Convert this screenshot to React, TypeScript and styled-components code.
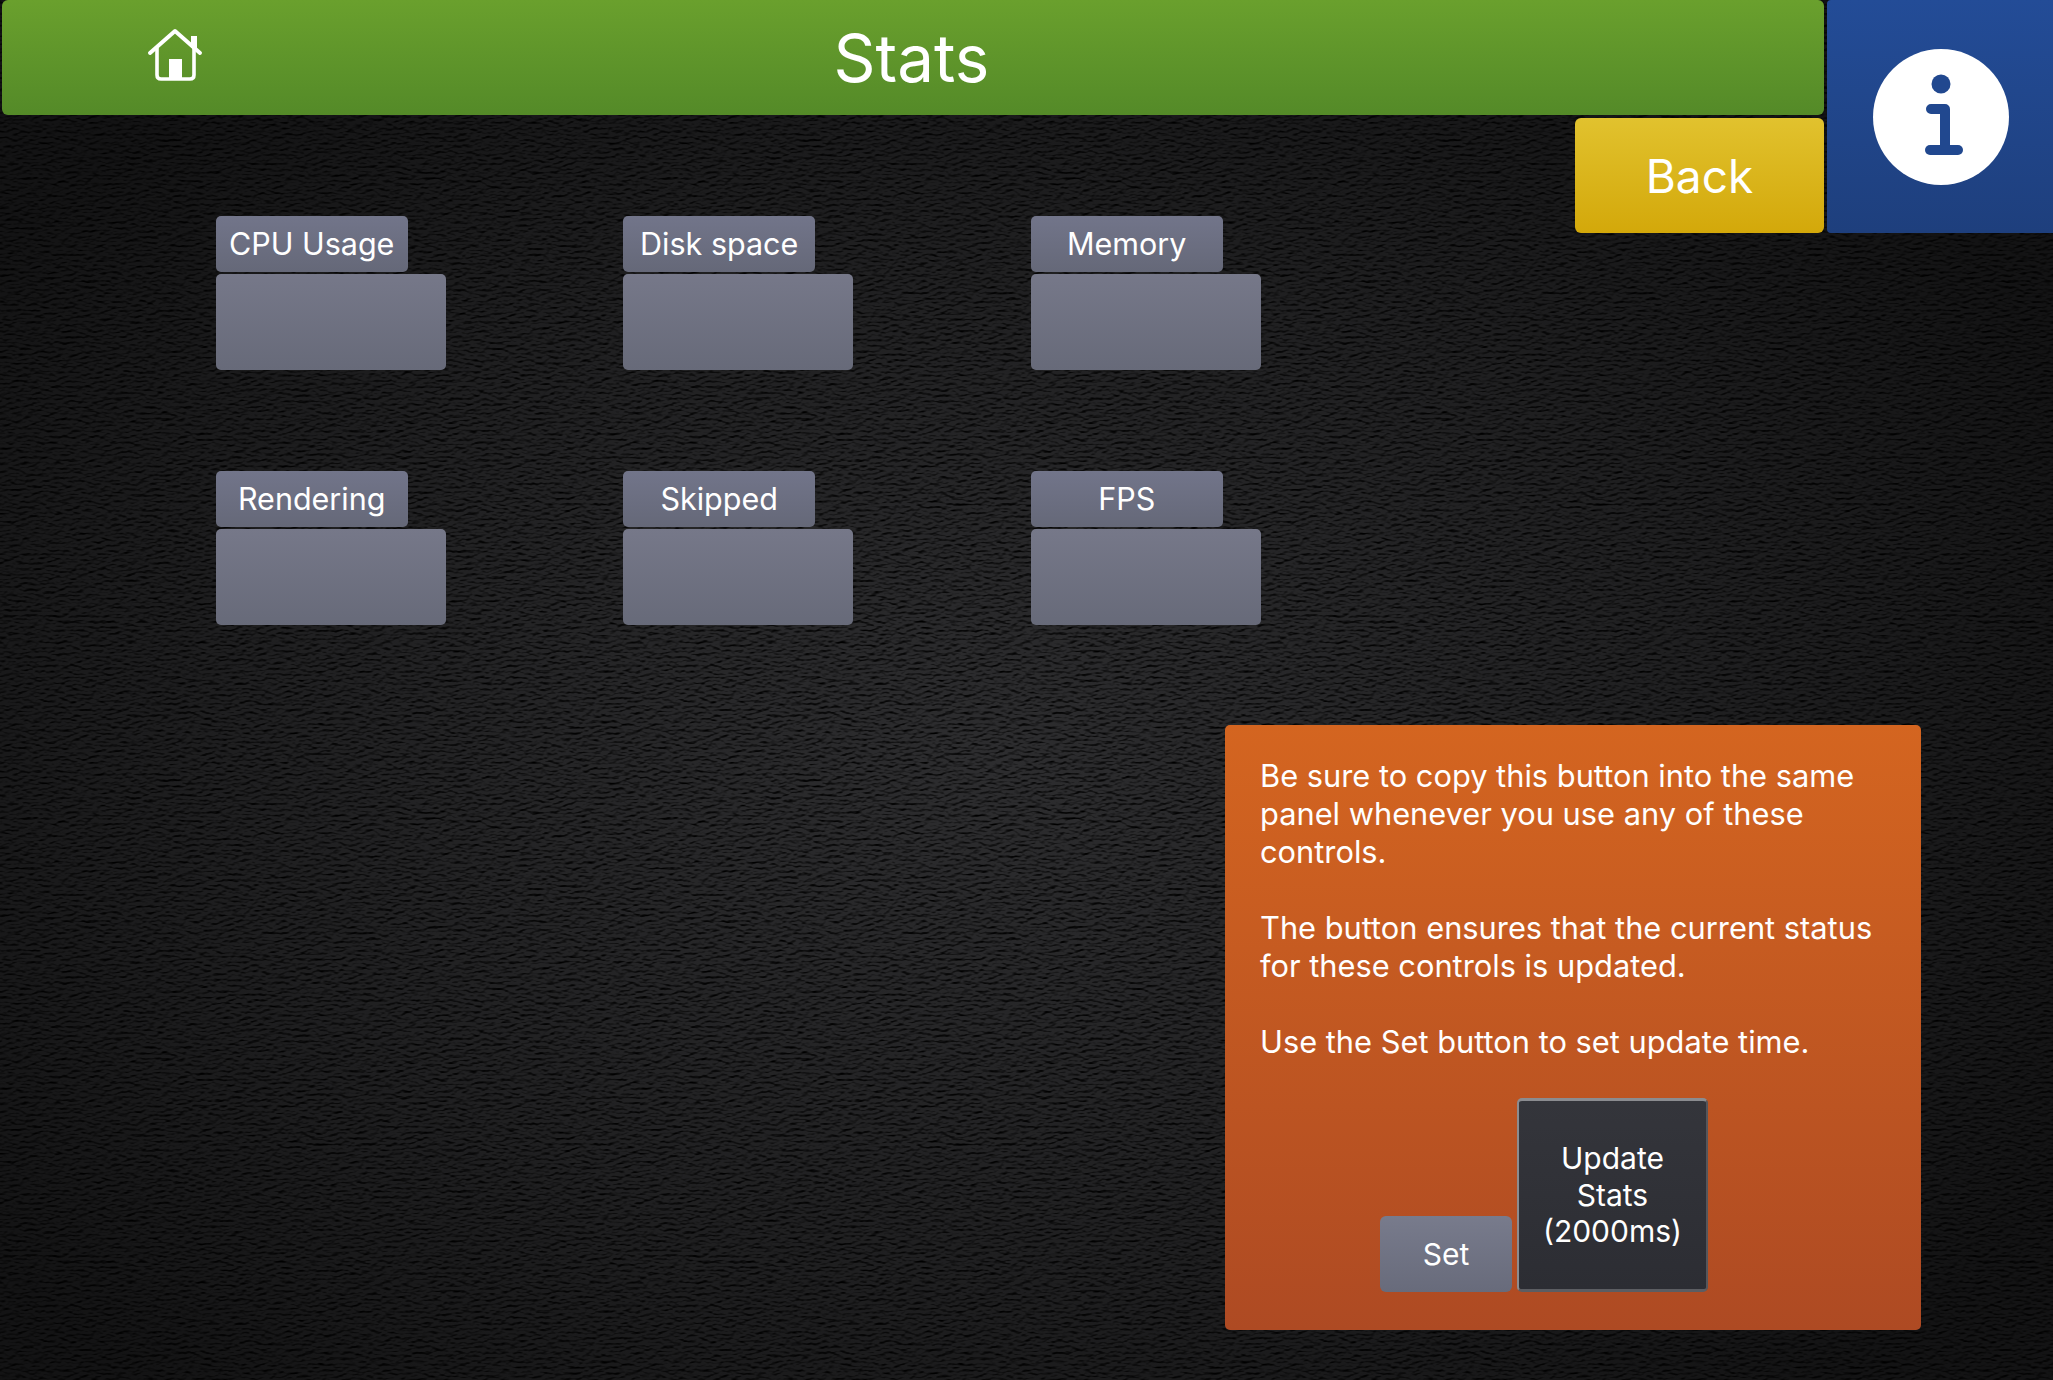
import styled, { createGlobalStyle } from 'styled-components';

const noise = encodeURIComponent(
  `<svg xmlns='http://www.w3.org/2000/svg' width='640' height='640'><filter id='n' x='0' y='0' width='100%' height='100%' color-interpolation-filters='sRGB'><feTurbulence type='fractalNoise' baseFrequency='0.13 0.34' numOctaves='2' seed='7' stitchTiles='stitch' result='t'/><feDiffuseLighting in='t' lighting-color='#ffffff' surfaceScale='2.6' diffuseConstant='1.15'><feDistantLight azimuth='80' elevation='52'/></feDiffuseLighting></filter><rect width='640' height='640' filter='url(#n)'/></svg>`
);

const GlobalStyle = createGlobalStyle`
  html, body {
    margin: 0;
    padding: 0;
    background: #101010;
  }
`;

const Page = styled.div`
  position: relative;
  width: 2053px;
  height: 1380px;
  overflow: hidden;
  display: flex;
  flex-direction: column;
  font-family: Inter, 'Liberation Sans', sans-serif;
  color: #fff;
  background-color: #2f2f31;
  background-image:
    radial-gradient(ellipse 60% 62% at 48% 55%, rgba(0, 0, 0, 0.04) 0%, rgba(0, 0, 0, 0.34) 60%, rgba(0, 0, 0, 0.6) 100%),
    url("data:image/svg+xml,${noise}");
  background-blend-mode: normal, multiply;
`;

const TopArea = styled.div`
  display: flex;
  height: 625px;
`;

const LeftColumn = styled.div`
  width: 1827px;
  padding-left: 2px;
  box-sizing: border-box;
`;

const Header = styled.header`
  position: relative;
  width: 1822px;
  height: 115px;
  border-radius: 6px;
  background: linear-gradient(180deg, #6aa02d 0%, #548a28 100%);
  display: flex;
  align-items: center;
  justify-content: center;
`;

const HomeLink = styled.a`
  position: absolute;
  left: 141px;
  top: 28px;
  display: block;
  width: 60px;
  height: 54px;
`;

const Title = styled.h1`
  margin: 0 0 -3px -3px;
  font-size: 65.5px;
  font-weight: 400;
  line-height: 1;
`;

const Content = styled.div`
  display: flex;
  justify-content: space-between;
  padding-right: 3px;
`;

const TileGrid = styled.div`
  display: grid;
  grid-template-columns: repeat(3, 230px);
  grid-auto-rows: 154px;
  column-gap: 177.5px;
  row-gap: 101px;
  padding: 101px 0 0 213.7px;
`;

const Tile = styled.div`
  display: flex;
  flex-direction: column;
  gap: 2px;
`;

const TileLabel = styled.div`
  width: 192px;
  height: 56px;
  padding-bottom: 1px;
  box-sizing: border-box;
  border-radius: 5px;
  background: linear-gradient(180deg, #72758a 0%, #656878 100%);
  display: flex;
  align-items: center;
  justify-content: center;
  font-size: 30.5px;
  white-space: nowrap;
`;

const TileValue = styled.div`
  width: 230px;
  height: 96px;
  border-radius: 5px;
  background: linear-gradient(180deg, #767889 0%, #676a79 100%);
`;

const BackButton = styled.button`
  width: 249px;
  height: 115px;
  margin-top: 3px;
  border: none;
  border-radius: 6px;
  background: linear-gradient(180deg, #e1c22e 0%, #d3a80a 100%);
  color: #fff;
  font-family: inherit;
  font-size: 46px;
  padding: 0;
`;

const InfoPanel = styled.div`
  width: 226px;
  height: 233px;
  padding-left: 2px;
  box-sizing: border-box;
  border-radius: 4px 0 0 4px;
  background: linear-gradient(180deg, #234c97 0%, #1e3f7d 100%);
  display: flex;
  align-items: center;
  justify-content: center;
`;

const NoticeRow = styled.div`
  display: flex;
  justify-content: flex-end;
  padding: 100px 132px 0 0;
`;

const Notice = styled.section`
  width: 696px;
  height: 605px;
  box-sizing: border-box;
  border-radius: 5px;
  padding: 32px 35px 38px;
  background: linear-gradient(180deg, #d46520 0%, #ae4a23 100%);
  display: flex;
  flex-direction: column;
`;

const NoticeText = styled.p`
  margin: 0 0 38px;
  font-size: 30.8px;
  line-height: 38px;

  &:last-of-type {
    margin-bottom: 0;
  }
`;

const Actions = styled.div`
  margin-top: auto;
  display: flex;
  align-items: flex-end;
  gap: 5px;
  padding-left: 120px;
`;

const SetButton = styled.button`
  width: 132px;
  height: 76px;
  border: none;
  border-radius: 6px;
  padding: 0;
  background: linear-gradient(180deg, #787b8c 0%, #686b7b 100%);
  color: #fff;
  font-family: inherit;
  font-size: 30px;
`;

const UpdateButton = styled.button`
  width: 191px;
  height: 194px;
  box-sizing: border-box;
  border: none;
  border-top: 3px solid #8b8c90;
  border-left: 2px solid #8b8c90;
  border-right: 2px solid #55565b;
  border-bottom: 3px solid #5c5d62;
  border-radius: 5px;
  padding: 0;
  background: linear-gradient(180deg, #34353b 0%, #2c2d33 100%);
  color: #fff;
  font-family: inherit;
  font-size: 30px;
  line-height: 36.5px;
`;

const tiles = ['CPU Usage', 'Disk space', 'Memory', 'Rendering', 'Skipped', 'FPS'];

function HomeIcon() {
  return (
    <svg width='60' height='54' viewBox='0 0 60 54' fill='none'>
      <path d='M7 25 L32 3 L57 25' stroke='#fff' strokeWidth='4' strokeLinecap='round' strokeLinejoin='round' />
      <path d='M14 20 V47 Q14 51 18 51 H47 Q51 51 51 47 V20' stroke='#fff' strokeWidth='3.6' />
      <rect x='26' y='31' width='13' height='20' fill='#fff' />
      <rect x='48' y='8' width='6' height='12' fill='#fff' />
    </svg>
  );
}

function InfoIcon() {
  return (
    <svg width='136' height='136' viewBox='0 0 136 136'>
      <circle cx='68' cy='68' r='68' fill='#fff' />
      <circle cx='68' cy='35' r='9.5' fill='#21488f' />
      <path d='M58 60 H72 V101' stroke='#21488f' strokeWidth='10' strokeLinecap='round' strokeLinejoin='round' fill='none' />
      <path d='M57 101 H85' stroke='#21488f' strokeWidth='10' strokeLinecap='round' fill='none' />
    </svg>
  );
}

export default function App() {
  return (
    <>
      <GlobalStyle />
      <Page>
        <TopArea>
          <LeftColumn>
            <Header>
              <HomeLink>
                <HomeIcon />
              </HomeLink>
              <Title>Stats</Title>
            </Header>
            <Content>
              <TileGrid>
                {tiles.map((name) => (
                  <Tile key={name}>
                    <TileLabel>{name}</TileLabel>
                    <TileValue />
                  </Tile>
                ))}
              </TileGrid>
              <BackButton>Back</BackButton>
            </Content>
          </LeftColumn>
          <InfoPanel>
            <InfoIcon />
          </InfoPanel>
        </TopArea>
        <NoticeRow>
          <Notice>
            <NoticeText>
              Be sure to copy this button into the same panel whenever you use any of these controls.
            </NoticeText>
            <NoticeText>
              The button ensures that the current status for these controls is updated.
            </NoticeText>
            <NoticeText>Use the Set button to set update time.</NoticeText>
            <Actions>
              <SetButton>Set</SetButton>
              <UpdateButton>
                Update
                <br />
                Stats
                <br />
                (2000ms)
              </UpdateButton>
            </Actions>
          </Notice>
        </NoticeRow>
      </Page>
    </>
  );
}
